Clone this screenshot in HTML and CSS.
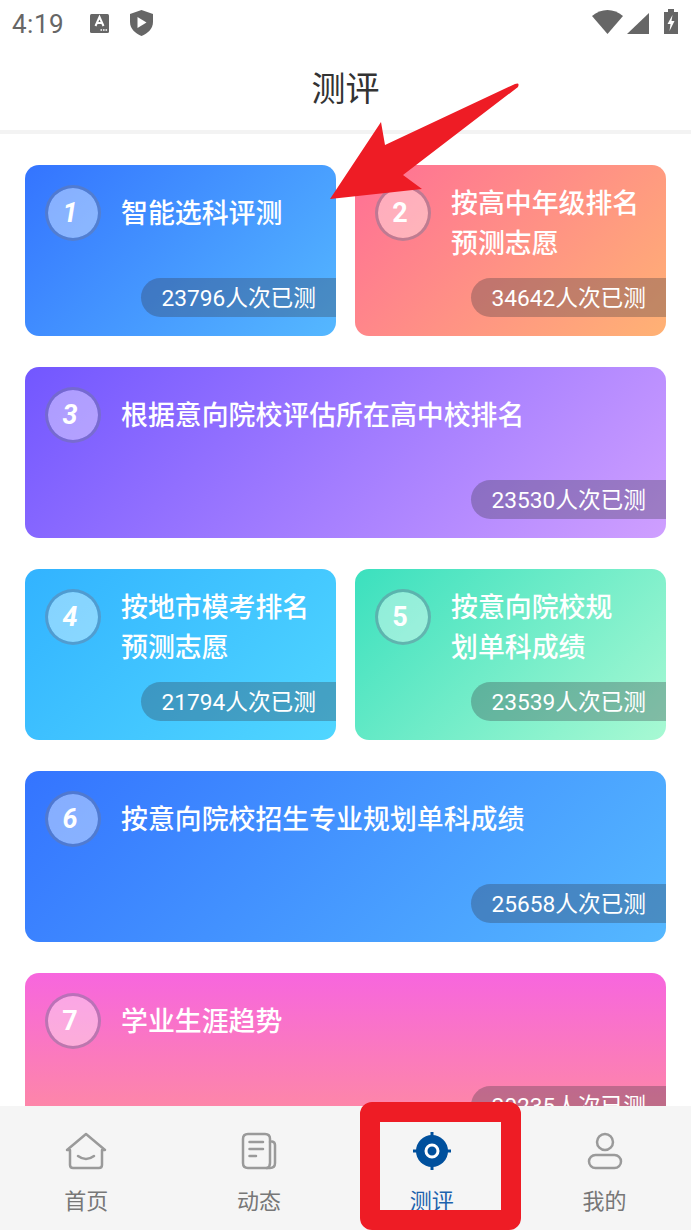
FILE: index.html
```html
<!DOCTYPE html>
<html lang="zh-CN">
<head>
  <meta charset="UTF-8">
  <meta name="viewport" content="width=device-width, initial-scale=1.0">
  <title>测评</title>
  <link rel="stylesheet" href="styles.css">
</head>
<body>
<div class="phone">
  <!-- status bar -->
  <div class="status-bar">
    <div class="status-left">
      <span class="time">4:19</span>
      <svg class="icon-a" width="19" height="19" viewBox="0 0 19 19">
        <rect width="19" height="19" rx="1.500" fill="#666"/>
        <path d="M5.500 12 L9.500 3 L13.500 12 M7 9 H12" fill="none" stroke="#fff" stroke-width="2"/>
        <path d="M10.500 16 h1.600 M13 16 h1.600 M15.500 16 h1.600" stroke="#fff" stroke-width="1.600"/>
      </svg>
      <svg class="icon-shield" width="23" height="26" viewBox="0 0 23 26">
        <path d="M11.500 0 L23 4 V12 C23 19 17.500 23.500 11.500 26 C5.500 23.500 0 19 0 12 V4 Z" fill="#666"/>
        <path d="M7.500 7 L16.500 12.500 L7.500 18 Z" fill="#fff"/>
      </svg>
    </div>
    <div class="status-right">
      <svg class="icon-wifi" width="31" height="24" viewBox="0 0 31 24"><path d="M0 6 C9 -2 22 -2 31 6 L15.500 24 Z" fill="#666"/></svg>
      <svg class="icon-signal" width="22" height="21" viewBox="0 0 22 21"><path d="M22 0 V21 H0 Z" fill="#666"/></svg>
      <svg width="14" height="25" viewBox="0 0 14 25">
        <path d="M4 0 H10 V3 H14 V25 H0 V3 H4 Z" fill="#666"/>
        <path d="M8.500 6 L3.500 15 H6.500 L5.500 22 L10.500 12 H7.500 Z" fill="#fff"/>
      </svg>
    </div>
  </div>

  <!-- title -->
  <header class="title-bar">
    <h1>测评</h1>
  </header>

  <!-- cards -->
  <main class="content">
    <div class="card-grid">
      <div class="card card-blue">
        <span class="num">1</span>
        <p class="card-title">智能选科评测</p>
        <span class="count">23796人次已测</span>
      </div>
      <div class="card card-coral">
        <span class="num upright">2</span>
        <p class="card-title two-line">按高中年级排名<br>预测志愿</p>
        <span class="count">34642人次已测</span>
      </div>
      <div class="card wide card-violet">
        <span class="num">3</span>
        <p class="card-title">根据意向院校评估所在高中校排名</p>
        <span class="count">23530人次已测</span>
      </div>
      <div class="card card-sky">
        <span class="num">4</span>
        <p class="card-title two-line">按地市模考排名<br>预测志愿</p>
        <span class="count">21794人次已测</span>
      </div>
      <div class="card card-mint">
        <span class="num upright">5</span>
        <p class="card-title two-line">按意向院校规<br>划单科成绩</p>
        <span class="count">23539人次已测</span>
      </div>
      <div class="card wide card-blue">
        <span class="num">6</span>
        <p class="card-title">按意向院校招生专业规划单科成绩</p>
        <span class="count">25658人次已测</span>
      </div>
      <div class="card wide card-pink">
        <span class="num upright">7</span>
        <p class="card-title">学业生涯趋势</p>
        <span class="count">20235人次已测</span>
      </div>
    </div>
  </main>

  <!-- bottom tabs -->
  <nav class="tab-bar">
    <a class="tab">
      <svg width="42" height="38" viewBox="0 0 42 38" fill="none" stroke="#9a9a9a" stroke-width="2.500" stroke-linejoin="round" stroke-linecap="round">
        <path d="M21 2 L40 18 H37 V33 Q37 36 34 36 H8 Q5 36 5 33 V18 H2 Z"/>
        <path d="M13 24 Q21 30 29 24"/>
      </svg>
      <span>首页</span>
    </a>
    <a class="tab">
      <svg width="36" height="38" viewBox="0 0 36 38" fill="none" stroke="#9a9a9a" stroke-width="2.500" stroke-linecap="round">
        <path d="M29 10 V7 Q29 2 24 2 H7 Q2 2 2 7 V31 Q2 36 7 36 H29 Q34 36 34 31 V13 Q34 10 31 9.500"/>
        <path d="M29 10 V31 Q29 35 26 36"/>
        <path d="M8.500 10 H22 M8.500 17 H22 M8.500 24 H15"/>
      </svg>
      <span>动态</span>
    </a>
    <a class="tab active">
      <svg width="40" height="38" viewBox="0 0 40 38">
        <path d="M20 0 V38 M1 19 H39" stroke="#00509d" stroke-width="3"/>
        <circle cx="20" cy="19" r="16" fill="#00509d"/>
        <circle cx="20" cy="19" r="6" fill="none" stroke="#fff" stroke-width="3"/>
      </svg>
      <span>测评</span>
      <i class="tab-frame"></i>
    </a>
    <a class="tab">
      <svg width="36" height="38" viewBox="0 0 36 38" fill="none" stroke="#9a9a9a" stroke-width="2.500">
        <circle cx="18" cy="10" r="8"/>
        <rect x="2" y="23" width="32" height="13" rx="6.500"/>
      </svg>
      <span>我的</span>
    </a>
  </nav>

  <!-- red arrow marking the first card -->
  <svg class="arrow" width="200" height="130" viewBox="0 0 200 130">
    <path d="M5 122 L56 45 L60 68 L190 7 Q195 5 193 10 L78 98 L97 112 Z" fill="#ee1c25"/>
  </svg>
</div>
</body>
</html>
```

FILE: styles.css
```css
* {
  margin: 0;
  padding: 0;
  box-sizing: border-box;
}

body {
  background-color: white;
  font-family: Roboto, 'Noto Sans CJK SC', sans-serif;
}

.phone {
  position: relative;
  width: 691px;
  height: 1230px;
  display: flex;
  flex-direction: column;
  overflow: hidden;
}

/* status bar */
.status-bar {
  height: 46px;
  display: flex;
  justify-content: space-between;
  align-items: center;
  padding: 0 13px 0 12px;
  flex-shrink: 0;
}

.status-left {
  display: flex;
  align-items: center;
}

.time {
  font-size: 26px;
  color: #666;
  letter-spacing: 0.5px;
  margin-right: 26px;
  padding-top: 2px;
}

.icon-a {
  margin-right: 21px;
}

.status-right {
  display: flex;
  align-items: flex-end;
  padding-bottom: 3px;
}

.icon-wifi {
  margin-right: 4px;
}

.icon-signal {
  margin-right: 15px;
}

/* title */
.title-bar {
  height: 88px;
  border-bottom: 4px solid #f3f3f3;
  display: flex;
  justify-content: center;
  align-items: center;
  padding-bottom: 4px;
  flex-shrink: 0;
}

.title-bar h1 {
  font-size: 34px;
  font-weight: 400;
  color: #333;
}

/* cards */
.content {
  flex: 1;
  overflow: hidden;
  padding: 31px 25px 0;
}

.card-grid {
  display: grid;
  grid-template-columns: 311px 311px;
  grid-auto-rows: 171px;
  column-gap: 19px;
  row-gap: 31px;
}

.card {
  position: relative;
  border-radius: 14px;
  padding: 20px 20px 0;
  display: flex;
  align-items: flex-start;
  color: white;
}

.wide {
  grid-column: span 2;
}

.card-blue { background: linear-gradient(135deg, #3474ff, #55b8ff); }
.card-coral { background: linear-gradient(135deg, #ff6f96, #ffb274); }
.card-violet { background: linear-gradient(135deg, #7257ff, #cf9fff); }
.card-sky { background: linear-gradient(135deg, #32b3ff, #50d6ff); }
.card-mint { background: linear-gradient(135deg, #3be0be, #a8f9d3); }
.card-pink { background: linear-gradient(180deg, #f766de, #ff8f9a); }

.num {
  width: 56px;
  height: 56px;
  flex-shrink: 0;
  border-radius: 50%;
  border: 3px solid rgba(110,120,150,0.45);
  background-color: rgba(255,255,255,0.4);
  background-clip: padding-box;
  padding-right: 6px;
  display: flex;
  justify-content: center;
  align-items: center;
  font-size: 27px;
  font-weight: 700;
  font-style: italic;
}

.num.upright {
  font-style: normal;
}

.card-title {
  margin: 9px 0 0 20px;
  font-size: 26.900px;
  font-weight: 500;
  line-height: 40px;
  white-space: nowrap;
}

.two-line {
  margin-top: -1px;
}

.count {
  position: absolute;
  right: 0;
  bottom: 19px;
  height: 39px;
  padding: 0 20px;
  border-radius: 20px 0 0 20px;
  background-color: rgba(50,50,60,0.3);
  font-size: 22.700px;
  line-height: 41px;
  white-space: nowrap;
}

/* bottom tabs */
.tab-bar {
  position: relative;
  height: 124px;
  background-color: #f5f5f5;
  display: grid;
  grid-template-columns: repeat(4, 1fr);
  flex-shrink: 0;
}

.tab {
  position: relative;
  display: flex;
  flex-direction: column;
  align-items: center;
  padding-top: 26px;
  font-size: 22px;
  color: #777;
}

.tab span {
  margin-top: 16px;
  line-height: 32px;
}

.tab.active {
  color: #1c62ad;
}

.tab-frame {
  position: absolute;
  top: -4px;
  left: 14px;
  width: 161px;
  height: 128px;
  border: 20px solid #ee1c25;
  border-radius: 12px;
}

.arrow {
  position: absolute;
  left: 325px;
  top: 77px;
}
```
